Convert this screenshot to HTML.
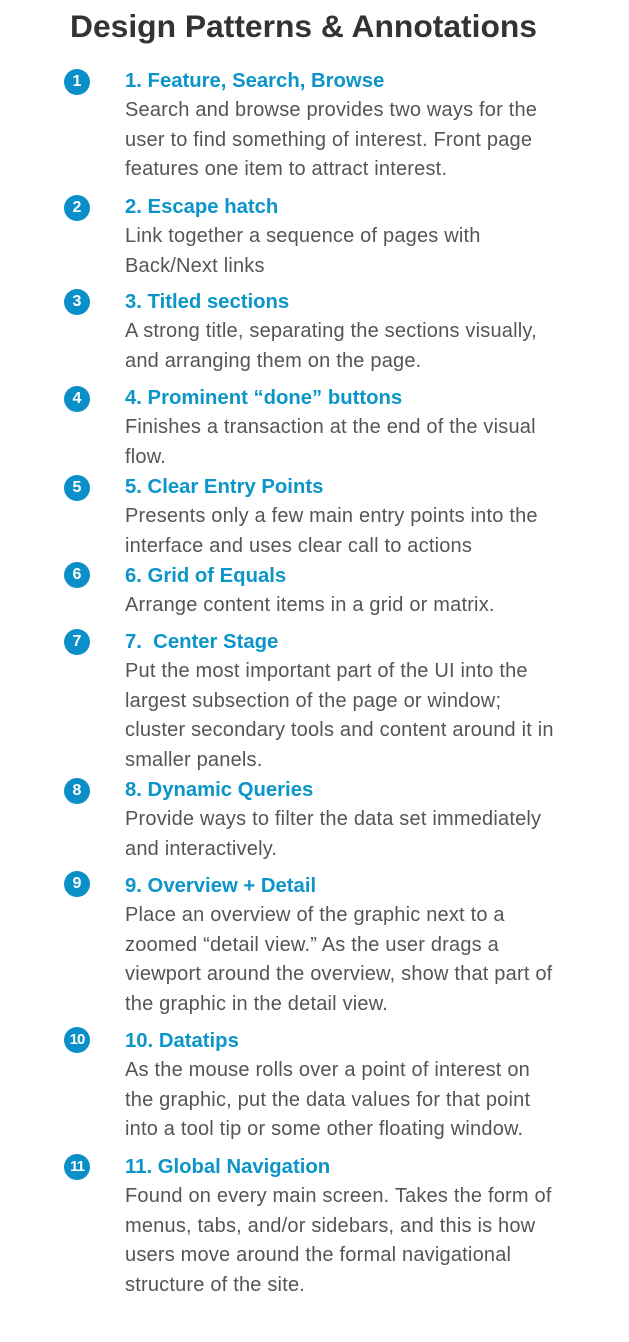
<!DOCTYPE html>
<html><head><meta charset="utf-8"><style>
body{margin:0;width:629px;height:1342px;background:#fff;position:relative;overflow:hidden;font-family:"Liberation Sans",Arial,sans-serif}
h1{position:absolute;left:0;width:607px;top:6px;margin:0;text-align:center;font-size:31.8px;font-weight:bold;color:#333;line-height:40px}
.c{position:absolute;left:64px;width:26px;height:26px;border-radius:50%;background:#0b8fc9;color:#fff;font-weight:bold;font-size:16px;line-height:26px;text-align:center}
.c.s{font-size:15px;letter-spacing:-1px}
.b{position:absolute;left:125px;width:500px;font-size:20px;letter-spacing:0.2px;line-height:29.6px;color:#555}
.b b{color:#0b95c8;font-size:20.3px;letter-spacing:0;display:block;line-height:22px;margin-bottom:4px}
</style></head><body>
<h1>Design Patterns &amp; Annotations</h1>

<div class="c" style="top:69px">1</div>
<div class="b" style="top:70px"><b>1. Feature, Search, Browse</b>Search and browse provides two ways for the<br>user to find something of interest. Front page<br>features one item to attract interest.</div>

<div class="c" style="top:195px">2</div>
<div class="b" style="top:196px"><b>2. Escape hatch</b>Link together a sequence of pages with<br>Back/Next links</div>

<div class="c" style="top:289px">3</div>
<div class="b" style="top:291px"><b>3. Titled sections</b>A strong title, separating the sections visually,<br>and arranging them on the page.</div>

<div class="c" style="top:386px">4</div>
<div class="b" style="top:387px"><b>4. Prominent “done” buttons</b>Finishes a transaction at the end of the visual<br>flow.</div>

<div class="c" style="top:475px">5</div>
<div class="b" style="top:476px"><b>5. Clear Entry Points</b>Presents only a few main entry points into the<br>interface and uses clear call to actions</div>

<div class="c" style="top:562px">6</div>
<div class="b" style="top:565px"><b>6. Grid of Equals</b>Arrange content items in a grid or matrix.</div>

<div class="c" style="top:629px">7</div>
<div class="b" style="top:631px"><b>7.&nbsp; Center Stage</b>Put the most important part of the UI into the<br>largest subsection of the page or window;<br>cluster secondary tools and content around it in<br>smaller panels.</div>

<div class="c" style="top:778px">8</div>
<div class="b" style="top:779px"><b>8. Dynamic Queries</b>Provide ways to filter the data set immediately<br>and interactively.</div>

<div class="c" style="top:871px">9</div>
<div class="b" style="top:875px"><b>9. Overview + Detail</b>Place an overview of the graphic next to a<br>zoomed “detail view.” As the user drags a<br>viewport around the overview, show that part of<br>the graphic in the detail view.</div>

<div class="c s" style="top:1027px">10</div>
<div class="b" style="top:1030px"><b>10. Datatips</b>As the mouse rolls over a point of interest on<br>the graphic, put the data values for that point<br>into a tool tip or some other floating window.</div>

<div class="c s" style="top:1154px">11</div>
<div class="b" style="top:1156px"><b>11. Global Navigation</b>Found on every main screen. Takes the form of<br>menus, tabs, and/or sidebars, and this is how<br>users move around the formal navigational<br>structure of the site.</div>
</body></html>
